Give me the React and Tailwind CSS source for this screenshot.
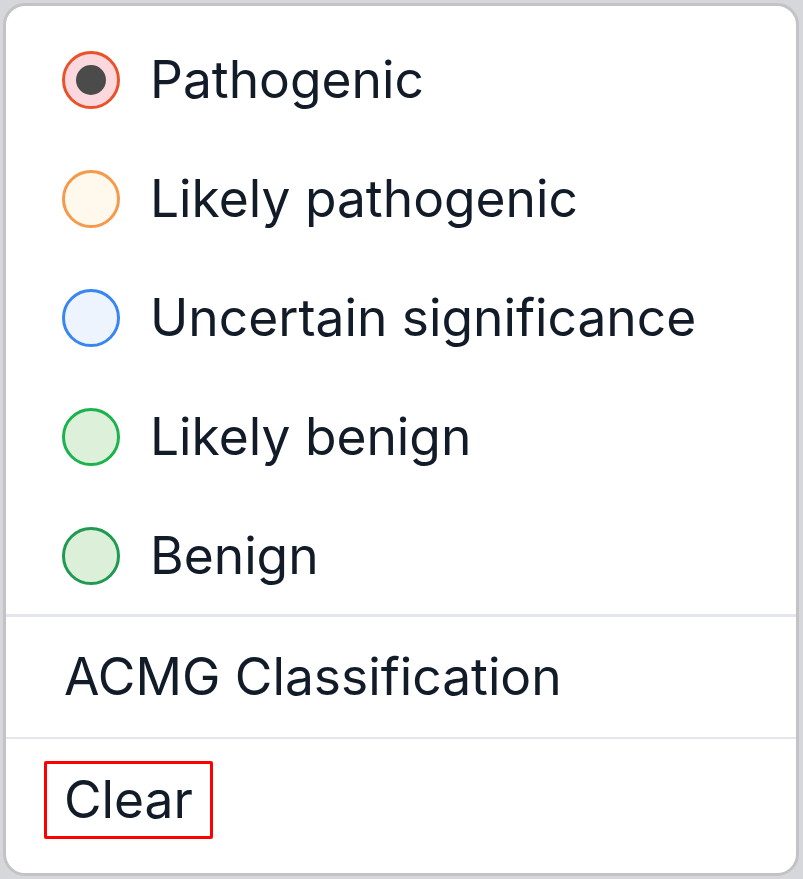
import React, { useState } from 'react'

const options = [
  { label: 'Pathogenic', ring: 'border-[#e9532b]', fill: 'bg-[#fbd8de]' },
  { label: 'Likely pathogenic', ring: 'border-[#f5994a]', fill: 'bg-[#fff8ec]' },
  { label: 'Uncertain significance', ring: 'border-[#3a86f0]', fill: 'bg-[#edf4fe]' },
  { label: 'Likely benign', ring: 'border-[#1cb34f]', fill: 'bg-[#dcf0da]' },
  { label: 'Benign', ring: 'border-[#209a52]', fill: 'bg-[#dcefd9]' },
]

const App = () => {
  const [selected, setSelected] = useState('Pathogenic')

  return (
    <div className="w-[803px] h-[879px] bg-[#d6d7da] p-[3px] pb-[3px]" style={{ fontFamily: "Inter, 'Noto Sans', sans-serif" }}>
      <div className="h-full w-[796px] bg-white border-[3px] border-[#c3c3c5] rounded-[22px] overflow-hidden flex flex-col text-[#121b28]">

        {/* Options */}
        <div className="pt-[14px]">
          {options.map((o) => (
            <button
              key={o.label}
              onClick={() => setSelected(o.label)}
              className="w-full h-[119px] flex items-center pl-[56px] gap-[30px] text-left"
            >
              <span className={`w-[58px] h-[58px] rounded-full border-[3px] ${o.ring} ${o.fill} flex items-center justify-center shrink-0`}>
                {selected === o.label && <span className="w-[30px] h-[30px] rounded-full bg-[#4b4b4b]" />}
              </span>
              <span className="text-[51.5px] leading-none">{o.label}</span>
            </button>
          ))}
        </div>

        <div className="h-[3px] bg-[#e4e6ed] -mt-[1px]" />

        {/* Group label */}
        <div className="h-[120px] flex items-center pl-[58px] text-[51.5px] leading-none">
          ACMG Classification
        </div>

        <div className="h-[2px] bg-[#e4e6ed]" />

        {/* Clear */}
        <div className="pt-[22px] pl-[38px]">
          <button
            onClick={() => setSelected(null)}
            className="h-[78px] px-[17px] border-[3px] border-[#ff0000] rounded-[2px] flex items-center text-[51.5px] leading-none"
          >
            Clear
          </button>
        </div>
      </div>
    </div>
  )
}

export default App
